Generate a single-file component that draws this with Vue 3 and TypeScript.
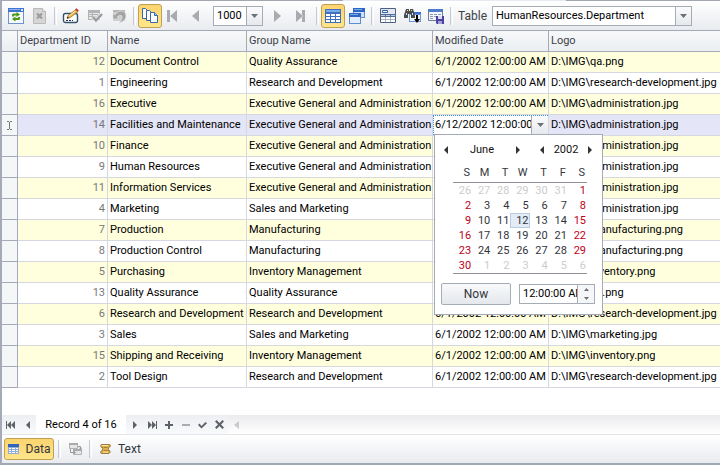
<script setup lang="ts">
import { computed, ref } from 'vue'

interface Department {
  id: number
  name: string
  group: string
  modified: string
  logo: string
}

interface Day {
  key: number
  value: number
  other: boolean
  weekend: boolean
}

const R = 'Research and Development'
const E = 'Executive General and Administration'
const M = 'Manufacturing'
const stamp = '6/1/2002 12:00:00 AM'

const row = (id: number, name: string, group: string, file: string): Department => ({
  id, name, group, modified: stamp, logo: 'D:\\IMG\\' + file,
})

const rows: Department[] = [
  row(12, 'Document Control', 'Quality Assurance', 'qa.png'),
  row(1, 'Engineering', R, 'research-development.jpg'),
  row(16, 'Executive', E, 'administration.jpg'),
  row(14, 'Facilities and Maintenance', E, 'administration.jpg'),
  row(10, 'Finance', E, 'administration.jpg'),
  row(9, 'Human Resources', E, 'administration.jpg'),
  row(11, 'Information Services', E, 'administration.jpg'),
  row(4, 'Marketing', 'Sales and Marketing', 'administration.jpg'),
  row(7, 'Production', M, 'manufacturing.png'),
  row(8, 'Production Control', M, 'manufacturing.png'),
  row(5, 'Purchasing', 'Inventory Management', 'inventory.png'),
  row(13, 'Quality Assurance', 'Quality Assurance', 'qa.png'),
  row(6, R, R, 'research-development.jpg'),
  row(3, 'Sales', 'Sales and Marketing', 'marketing.jpg'),
  row(15, 'Shipping and Receiving', 'Inventory Management', 'inventory.png'),
  row(2, 'Tool Design', R, 'research-development.jpg'),
]

const activeIndex = ref(3)
const pageSize = ref('1000')
const tableName = ref('HumanResources.Department')
const selectedDay = ref(12)
const time = ref('12:00:00 AM')
const editValue = computed(() => `6/${selectedDay.value}/2002 12:00:00 AM`)

const weekdays = ['S', 'M', 'T', 'W', 'T', 'F', 'S']
// The first cell of the grid is May 26, six days before June 1.
const weeks = computed<Day[][]>(() =>
  Array.from({ length: 6 }, (_, w) =>
    Array.from({ length: 7 }, (_, d) => {
      const n = w * 7 + d - 5
      return {
        key: n,
        value: n < 1 ? n + 31 : n > 30 ? n - 30 : n,
        other: n < 1 || n > 30,
        weekend: d === 0 || d === 6,
      }
    }),
  ),
)

function pick(day: Day) {
  if (!day.other) selectedDay.value = day.value
}
</script>

<template>
  <div class="app">
    <div class="edge"><span class="edge-tab"></span></div>
    <div class="toolbar">
      <button class="tool" aria-label="Refresh">
        <svg width="16" height="16" viewBox="0 0 16 16">
          <rect x=".5" y=".5" width="15" height="15" fill="#f6f9fe" stroke="#6f93cf" />
          <path d="M0 0h16v4H0z" fill="#3f74d0" /><path d="M1 1h11v1H1z" fill="#8db4f0" /><path d="M13 1h2v2h-2z" fill="#d8e6fb" />
          <path d="M4 8.500V7q0-1.500 1.500-1.500h3V4L12 6.500 8.500 9V7.500H6v1zM12 9v1.500q0 1.500-1.500 1.500h-3v1.500L4 11l3.500-2.500V10H10V9z" fill="#4c9a12" />
        </svg>
      </button>
      <button class="tool" aria-label="Cancel loading">
        <svg width="16" height="16" viewBox="0 0 16 16">
          <path d="M1.500.5h9l3 3v12h-12z" fill="#d6d6d6" stroke="#b9b9b9" /><path d="M10.500.5v3h3" fill="#eee" stroke="#b9b9b9" />
          <path d="M5 5.500l5 5m0-5l-5 5" stroke="#999" stroke-width="2" />
        </svg>
      </button>
      <span class="sep"></span>
      <button class="tool" aria-label="Edit data">
        <svg width="18" height="16" viewBox="0 0 18 16">
          <rect x="1.500" y="5.500" width="14" height="9" rx="2" fill="#fff" stroke="#34536f" stroke-width="1.400" />
          <path d="M4 12.500h2m1 0h2m1 0h1" stroke="#203448" />
          <path d="M5 10.500l1-3 8-6 2 2.200-8 6z" fill="#e8b64c" stroke="#8a5a23" stroke-width=".6" />
          <path d="M13 1.500l1.500-1.200 2.300 2.300-1.300 1.200z" fill="#c73425" /><path d="M7 8l6.500-5" stroke="#fff0b0" /><path d="M5 10.500l.5-2 1.500 1.500z" fill="#222" />
        </svg>
      </button>
      <button class="tool" aria-label="Accept changes">
        <svg width="16" height="16" viewBox="0 0 16 16">
          <path d="M1 2h12v10H1z" fill="#b4b4b4" /><path d="M2 5h3v1H2zm4 0h6v1H6zM2 7h3v1H2zm4 0h4v1H6zM2 9h3v2H2z" fill="#e8e8e8" />
          <path d="M6 9l3 3 5-5" fill="none" stroke="#eee" stroke-width="4" /><path d="M6 9l3 3.500L15 6" fill="none" stroke="#9c9c9c" stroke-width="2.400" />
        </svg>
      </button>
      <button class="tool" aria-label="Undo changes">
        <svg width="16" height="16" viewBox="0 0 16 16">
          <path d="M2 2h12v11H2z" fill="#cecece" /><path d="M2 2h12v2H2z" fill="#b4b4b4" />
          <path d="M2 5v6h6L6 9q3-3 5-1 1 3-3 7 7-2 7-7 0-5-5-5-4 0-6 4z" fill="#a4a4a4" stroke="#e2e2e2" stroke-width=".7" />
        </svg>
      </button>
      <span class="sep"></span>
      <button class="tool on" aria-label="Paging" aria-pressed="true">
        <svg width="16" height="16" viewBox="0 0 16 16">
          <g fill="#fff" stroke="#3a66a8"><path d="M.5.500h3l2 2v8h-5z" /><path d="M4.500 2.500h3l2 2v8h-5z" /><path d="M8.500 4.500h4l3 3v7h-7z" /></g>
          <path d="M12.500 4.500v3h3" fill="#a9c8f0" stroke="#3a66a8" />
        </svg>
      </button>
      <button class="tool" aria-label="First page">
        <svg class="page" width="16" height="16" viewBox="0 0 16 16"><path d="M1 2h3v12H1zM11 2v12L4 8z" /></svg>
      </button>
      <button class="tool" aria-label="Previous page">
        <svg class="page" width="16" height="16" viewBox="0 0 16 16"><path d="M9 2v12L2 8z" /></svg>
      </button>
      <div class="combo size">
        <select v-model="pageSize" aria-label="Page size"><option>1000</option></select>
        <span class="drop"><svg width="7" height="4" viewBox="0 0 7 4"><path d="M0 0h7L3.500 4z" /></svg></span>
      </div>
      <button class="tool" aria-label="Next page">
        <svg class="page" width="16" height="16" viewBox="0 0 16 16"><path d="M4 2v12l7-6z" /></svg>
      </button>
      <button class="tool" aria-label="Last page">
        <svg class="page" width="16" height="16" viewBox="0 0 16 16"><path d="M2 2v12l7-6zM8 2h3v12H8z" /></svg>
      </button>
      <span class="sep"></span>
      <button class="tool on" aria-label="Grid view" aria-pressed="true">
        <svg width="16" height="14" viewBox="0 0 16 14">
          <path d="M0 0h16v14H0z" fill="#416fbd" /><path d="M1 1h14v2H1z" fill="#78aaf0" />
          <path d="M1 5h4v2H1zm5 0h4v2H6zm5 0h4v2h-4zM1 8h4v2H1zm5 0h4v2H6zm5 0h4v2h-4zM1 11h4v2H1zm5 0h4v2H6zm5 0h4v2h-4z" fill="#fff" />
        </svg>
      </button>
      <button class="tool" aria-label="Card view">
        <svg width="16" height="16" viewBox="0 0 16 16">
          <path d="M4 0h12v10H4z" fill="#5d8ccf" /><path d="M4 0h12v4H4z" fill="#2d67c4" /><path d="M5 1h8v1H5z" fill="#78a9ed" /><path d="M5 4h10v5H5z" fill="#cfe0f7" />
          <path d="M0 5h12v11H0z" fill="#5d8ccf" /><path d="M0 5h12v4H0z" fill="#2d67c4" /><path d="M1 6h8v1H1z" fill="#78a9ed" /><path d="M1 9h10v6H1z" fill="#e2edfb" />
        </svg>
      </button>
      <span class="sep"></span>
      <button class="tool" aria-label="Group panel">
        <svg width="16" height="15" viewBox="0 0 16 15">
          <path d="M.5.500h15v14H.5z" fill="#fff" stroke="#50607d" /><path d="M1 1h14v5H1z" fill="#e3e9f3" /><path d="M2.500 2.500h5v2h-5z" fill="#fff" stroke="#315f9e" />
          <path d="M0 6h16v3H0z" fill="#546b92" /><path d="M1 7h4v1H1zm5 0h4v1H6zm5 0h4v1h-4z" fill="#b8c9e6" /><path d="M5.500 9v5M10.500 9v5M1 11.500h14" stroke="#a7b0c0" />
        </svg>
      </button>
      <button class="tool" aria-label="Find">
        <svg width="17" height="16" viewBox="0 0 17 16">
          <path d="M5 4h12v10H5z" fill="#6d95d8" /><path d="M6 7h10v6H6z" fill="#eef4fd" /><path d="M9 4h8v2H9z" fill="#3970cf" />
          <path d="M2 1h3v2h1V1h3l1 3 1 4v2H7V6H4v4H0V7l1-3z" fill="#4c4c4c" /><path d="M2 5h1v2H2zM8 5h1v2H8zM3 2h1v1H3zM7 2h1v1H7z" fill="#ddd" />
          <path d="M12 7h2v4h2l-3 4-3-4h2z" fill="#000" />
        </svg>
      </button>
      <button class="tool" aria-label="Save layout">
        <svg width="16" height="16" viewBox="0 0 16 16">
          <path d="M.5 1.500h14v11H.5z" fill="#f3f7fd" stroke="#6b7e9d" /><path d="M0 1h15v3H0z" fill="#4d7dc9" />
          <path d="M2 6.500h3m1 0h3m1 0h3M2 8.500h3m1 0h3M2 10.500h3" stroke="#8c9ab0" />
          <path d="M8 8h8v8H9l-1-1z" fill="#4940a0" /><path d="M10 8h4v3h-4z" fill="#dadbf4" /><path d="M10 13h4v3h-4z" fill="#a5a0d8" />
        </svg>
      </button>
      <span class="sep"></span>
      <label class="table-label" for="table-name">Table</label>
      <div class="combo name">
        <select id="table-name" v-model="tableName"><option>HumanResources.Department</option></select>
        <span class="drop"><svg width="7" height="4" viewBox="0 0 7 4"><path d="M0 0h7L3.500 4z" /></svg></span>
      </div>
    </div>

    <main class="content">
      <table class="data">
        <colgroup><col class="c-mark" /><col class="c-id" /><col class="c-name" /><col class="c-group" /><col class="c-date" /><col /></colgroup>
        <thead>
          <tr><th class="mark"></th><th>Department ID</th><th>Name</th><th>Group Name</th><th>Modified Date</th><th>Logo</th></tr>
        </thead>
        <tbody>
          <tr v-for="(r, i) in rows" :key="r.id" :class="{ active: i === activeIndex }">
            <td class="mark">
              <svg v-if="i === activeIndex" width="5" height="9" viewBox="0 0 5 9"><path d="M0 .5h2m1 0h2M2.500 1v7M0 8.500h2m1 0h2" stroke="#74777b" /></svg>
            </td>
            <td class="id">{{ r.id }}</td>
            <td>{{ r.name }}</td>
            <td>{{ r.group }}</td>
            <td v-if="i === activeIndex" class="editing">
              <div class="editor">
                <input type="text" :value="editValue" aria-label="Modified Date" />
                <button class="drop" aria-label="Open calendar"><svg width="7" height="4" viewBox="0 0 7 4"><path d="M0 0h7L3.500 4z" /></svg></button>
              </div>
              <div class="popup">
                <div class="period">
                  <button aria-label="Previous month"><svg width="4" height="8" viewBox="0 0 4 8"><path d="M4 0v8L0 4z" /></svg></button>
                  <span class="month">June</span>
                  <button aria-label="Next month"><svg width="4" height="8" viewBox="0 0 4 8"><path d="M0 0v8l4-4z" /></svg></button>
                  <button class="year-prev" aria-label="Previous year"><svg width="4" height="8" viewBox="0 0 4 8"><path d="M4 0v8L0 4z" /></svg></button>
                  <span class="year">2002</span>
                  <button aria-label="Next year"><svg width="4" height="8" viewBox="0 0 4 8"><path d="M0 0v8l4-4z" /></svg></button>
                </div>
                <table class="days">
                  <thead><tr><th v-for="(d, k) in weekdays" :key="k">{{ d }}</th></tr></thead>
                  <tbody>
                    <tr v-for="(w, k) in weeks" :key="k">
                      <td v-for="d in w" :key="d.key">
                        <button :class="{ other: d.other, weekend: d.weekend, picked: !d.other && d.value === selectedDay }" @click="pick(d)">{{ d.value }}</button>
                      </td>
                    </tr>
                  </tbody>
                </table>
                <div class="actions">
                  <button class="now">Now</button>
                  <div class="time">
                    <input v-model="time" type="text" aria-label="Time" />
                    <div class="spin">
                      <button aria-label="Increase time"><svg width="5" height="3" viewBox="0 0 5 3"><path d="M0 3h5L2.500 0z" /></svg></button>
                      <button aria-label="Decrease time"><svg width="5" height="3" viewBox="0 0 5 3"><path d="M0 0h5L2.500 3z" /></svg></button>
                    </div>
                  </div>
                </div>
              </div>
            </td>
            <td v-else>{{ r.modified }}</td>
            <td>{{ r.logo }}</td>
          </tr>
        </tbody>
      </table>
    </main>

    <nav class="navigator">
      <button aria-label="First record"><svg width="10" height="8" viewBox="0 0 10 8"><path d="M0 0h1v8H0zM5 0v8L1 4zM5 4l4-4v8z" /></svg></button>
      <button aria-label="Previous record"><svg width="4" height="8" viewBox="0 0 4 8"><path d="M4 0v8L0 4z" /></svg></button>
      <span class="record">Record {{ activeIndex + 1 }} of {{ rows.length }}</span>
      <button aria-label="Next record"><svg width="4" height="8" viewBox="0 0 4 8"><path d="M0 0v8l4-4z" /></svg></button>
      <button aria-label="Last record"><svg width="10" height="8" viewBox="0 0 10 8"><path d="M1 0v8l4-4zM5 0v8l4-4zM9 0h1v8H9z" /></svg></button>
      <button aria-label="Add record"><svg width="8" height="8" viewBox="0 0 8 8"><path d="M3 0h2v3h3v2H5v3H3V5H0V3h3z" /></svg></button>
      <button aria-label="Delete record"><svg class="dim" width="8" height="8" viewBox="0 0 8 8"><path d="M0 3h8v2H0z" /></svg></button>
      <button aria-label="Save record"><svg width="9" height="8" viewBox="0 0 9 8"><path d="M0 4l1.500-1.500L3.500 5 7.500 1 9 2.200 3.500 7.500z" /></svg></button>
      <button aria-label="Cancel edit"><svg width="9" height="9" viewBox="0 0 9 9"><path d="M1.500 0l3 3 3-3L9 1.500l-3 3 3 3L7.500 9l-3-3-3 3L0 7.500l3-3-3-3z" /></svg></button>
      <div class="scroll"><button aria-label="Scroll left"><svg class="faint" width="5" height="8" viewBox="0 0 5 8"><path d="M5 0v8L0 4z" /></svg></button></div>
    </nav>

    <div class="tabs">
      <button class="tab on">
        <svg width="11" height="10" viewBox="0 0 11 10"><path d="M0 0h11v10H0z" fill="#8fabd6" /><path d="M0 0h11v3H0z" fill="#3165bd" /><path d="M1 4h2v1H1zm3 0h3v1H4zm4 0h2v1H8zM1 6h2v1H1zm3 0h3v1H4zm4 0h2v1H8zM1 8h2v1H1zm3 0h3v1H4zm4 0h2v1H8z" fill="#fff" /></svg>
        Data
      </button>
      <span class="sep"></span>
      <button class="tab icon" aria-label="Relations">
        <svg width="13" height="12" viewBox="0 0 13 12"><path d="M.5.500h8v5h-8zM4.500 6.500h8v5h-8z" fill="#e6e6e6" stroke="#b3b3b3" /><path d="M0 0h9v2H0zM4 6h9v2H4z" fill="#aaa" /><path d="M9 3.500h2.500V6M1.500 6v3.500H6M4.500 8l2 1.500-2 1.500M10 4.500l1.500 1.500 1.500-1.500" fill="none" stroke="#999" /></svg>
      </button>
      <span class="sep"></span>
      <button class="tab">
        <svg width="11" height="10" viewBox="0 0 11 10"><path d="M2 .5h7q1.500 0 1.500 1.200T9 3L8 6.500h1.500Q10.500 7 10 8.500 9.500 9.500 8 9.500H1.500Q.3 9 .6 8T2 7L3 3.500H1.500Q.4 2.500.8 1.300T2 .5z" fill="#e1b24c" stroke="#7b5518" stroke-width=".7" /><path d="M2 1.500h6M3 8h5" stroke="#fbe7a5" /><path d="M4 3.500h3.500M3.500 6.500h4" stroke="#a87c30" /></svg>
        Text
      </button>
    </div>
  </div>
</template>

<style>
body {
  margin: 0;
}
</style>

<style scoped>
.app {
  box-sizing: border-box;
  display: flex;
  flex-direction: column;
  min-height: 100vh;
  border-left: 2px solid #a5abb6;
  border-bottom: 2px solid #a0a8b3;
  background: #fff;
  color: #000;
  font: 11px/14px Roboto, "Liberation Sans", sans-serif;
  overflow: hidden;
}

button,
input,
select {
  box-sizing: border-box;
  margin: 0;
  padding: 0;
  border: 0;
  border-radius: 0;
  background: none;
  color: inherit;
  font: inherit;
}

button {
  display: flex;
  align-items: center;
  justify-content: center;
}

svg {
  display: block;
  flex: none;
}

.edge {
  display: flex;
  justify-content: center;
  height: 1px;
  padding-left: 26%;
  background: #a3a7b2;
}

.edge-tab {
  width: 42%;
  background: #e6eaf0;
}

.toolbar {
  display: flex;
  align-items: center;
  box-sizing: border-box;
  height: 30px;
  padding-left: 2px;
  border-bottom: 1px solid #a5abb6;
  background: linear-gradient(#fff, #e9ebef);
}

.tool {
  width: 24px;
  height: 24px;
  flex: none;
}

.on {
  border: 1px solid #c2a051;
  border-radius: 3px;
  background: linear-gradient(#fbd46f, #ffe68a);
}

.sep {
  box-sizing: border-box;
  flex: none;
  width: 3px;
  height: 18px;
  margin: 0 2px;
  border-left: 1px solid #c6cad0;
  border-right: 1px solid #fff;
}

.page {
  fill: #a8abaf;
}

.combo {
  display: grid;
  grid-template-columns: minmax(0, 1fr) 16px;
  box-sizing: border-box;
  height: 20px;
  border: 1px solid #a5acb5;
  background: #fff;
}

.combo select {
  grid-area: 1 / 1 / 2 / 3;
  appearance: none;
  padding: 0 16px 0 3px;
}

.combo .drop {
  grid-area: 1 / 2;
  pointer-events: none;
}

.size {
  width: 50px;
  margin: 0 3px;
  flex: none;
}

.name {
  flex: 0 1 200px;
  margin: 0 28px 0 4px;
}

.table-label {
  width: 30px;
  margin-left: 3px;
  color: #3c4148;
  font-size: 12px;
}

.drop {
  display: flex;
  align-items: center;
  justify-content: center;
  border-left: 1px solid #a5acb5;
  background: linear-gradient(#fafbfc, #e6e9ed);
  fill: #6b7178;
}

.content {
  flex: 1;
}

table {
  width: 100%;
  table-layout: fixed;
  border-spacing: 0;
}

.c-mark {
  width: 16px;
}

.c-id {
  width: 90px;
}

.c-name {
  width: 139px;
}

.c-group {
  width: 186px;
}

.c-date {
  width: 116px;
}

.data > thead th {
  box-sizing: border-box;
  height: 21px;
  padding: 0 2px;
  border-right: 1px solid #a5abb6;
  border-bottom: 1px solid #a5abb6;
  background: linear-gradient(#f7f8fa, #ebeef2);
  color: #3c4148;
  font-weight: 400;
  text-align: left;
  white-space: nowrap;
}

.data > tbody > tr > td {
  box-sizing: border-box;
  height: 21px;
  padding: 0 2px;
  border-right: 1px solid #d5d8de;
  border-bottom: 1px solid #d5d8de;
  white-space: nowrap;
}

.data > thead th:last-child,
.data > tbody > tr > td:last-child {
  border-right: 0;
}

.data > tbody > tr:nth-child(odd) {
  background: #ffffde;
}

.data > tbody > tr.active {
  background: #e5e5f8;
}

.data > tbody > tr > td.mark {
  border-color: #a5abb6;
  background: #f4f6f8;
}

.mark svg {
  margin: 0 auto;
}

.data > tbody > tr > td.id {
  color: #777;
  text-align: right;
}

.data > tbody > tr > td.editing {
  position: relative;
  padding: 0;
}

.editor {
  display: flex;
  box-sizing: border-box;
  height: 20px;
  border: 1px dotted #3c8fe0;
  border-right: 0;
  background: #fff;
}

.editor input {
  flex: 1;
  min-width: 0;
  padding-left: 1px;
}

.editor .drop {
  width: 17px;
}

.popup {
  position: absolute;
  z-index: 1;
  top: 19px;
  left: 1px;
  box-sizing: border-box;
  width: 169px;
  padding: 7px 7px 9px 6px;
  border: 1px solid #a5abb6;
  background: #fff;
  color: #32363c;
}

.period {
  display: flex;
  align-items: center;
  height: 16px;
  color: #111;
}

.period button {
  width: 10px;
  height: 16px;
  fill: #333;
}

.month {
  flex: 1;
  text-align: center;
}

.year {
  width: 38px;
  text-align: center;
}

.year-prev {
  margin-left: 14px;
}

.days {
  width: 134px;
  margin: 8px 0 0 12px;
  border-bottom: 1px solid #8d9096;
}

.days th {
  height: 14px;
  padding: 0 2px 2px 0;
  border-bottom: 1px solid #8d9096;
  font-weight: 400;
  text-align: right;
}

.days td {
  height: 15px;
  padding: 0;
}

.days button {
  width: 100%;
  height: 15px;
  justify-content: flex-end;
  padding-right: 1px;
}

.days .weekend {
  color: #c00018;
}

.days .other {
  color: #ccc;
}

.days .picked {
  padding-right: 0;
  border: 1px solid #bccce0;
  background: #e3ebf6;
}

.actions {
  display: flex;
  align-items: center;
  gap: 8px;
  margin-top: 9px;
}

.now {
  flex: none;
  width: 70px;
  height: 22px;
  border: 1px solid #a5acb5;
  border-radius: 2px;
  background: linear-gradient(#f8f9fb, #e4e8ec);
  font-size: 12px;
}

.time {
  display: flex;
  flex: 1;
  box-sizing: border-box;
  min-width: 0;
  height: 20px;
  border: 1px solid #a5acb5;
  color: #000;
}

.time input {
  flex: 1;
  min-width: 0;
  padding-left: 3px;
}

.spin {
  display: flex;
  flex: none;
  flex-direction: column;
  width: 16px;
  border-left: 1px solid #a5acb5;
  background: #f5f6f8;
  fill: #6b7178;
}

.spin button {
  flex: 1;
}

.navigator {
  display: flex;
  height: 19px;
  border-bottom: 1px solid #e4e5e8;
  background: #f4f5f7;
  fill: #5c6268;
}

.navigator button {
  flex: none;
  width: 17px;
  background: linear-gradient(#eceef2, #f9fafb);
}

.record {
  width: 90px;
  background: #fff;
  line-height: 19px;
  text-align: center;
}

.dim {
  fill: #a8abaf;
}

.faint {
  fill: #c8cacd;
}

.scroll {
  display: flex;
  flex: 1;
  background: linear-gradient(#ebebed, #fff);
}

.navigator .scroll button {
  height: 19px;
  background: none;
}

.tabs {
  display: flex;
  align-items: center;
  height: 28px;
  padding-left: 2px;
  background: linear-gradient(#fff, #e9ebef);
  color: #32363c;
  font-size: 12px;
}

.tab {
  gap: 7px;
  height: 22px;
  padding: 0 6px;
}

.tab.on {
  width: 50px;
  margin-right: 2px;
  padding: 0;
}

.tab.icon {
  width: 24px;
  padding: 0;
}
</style>
